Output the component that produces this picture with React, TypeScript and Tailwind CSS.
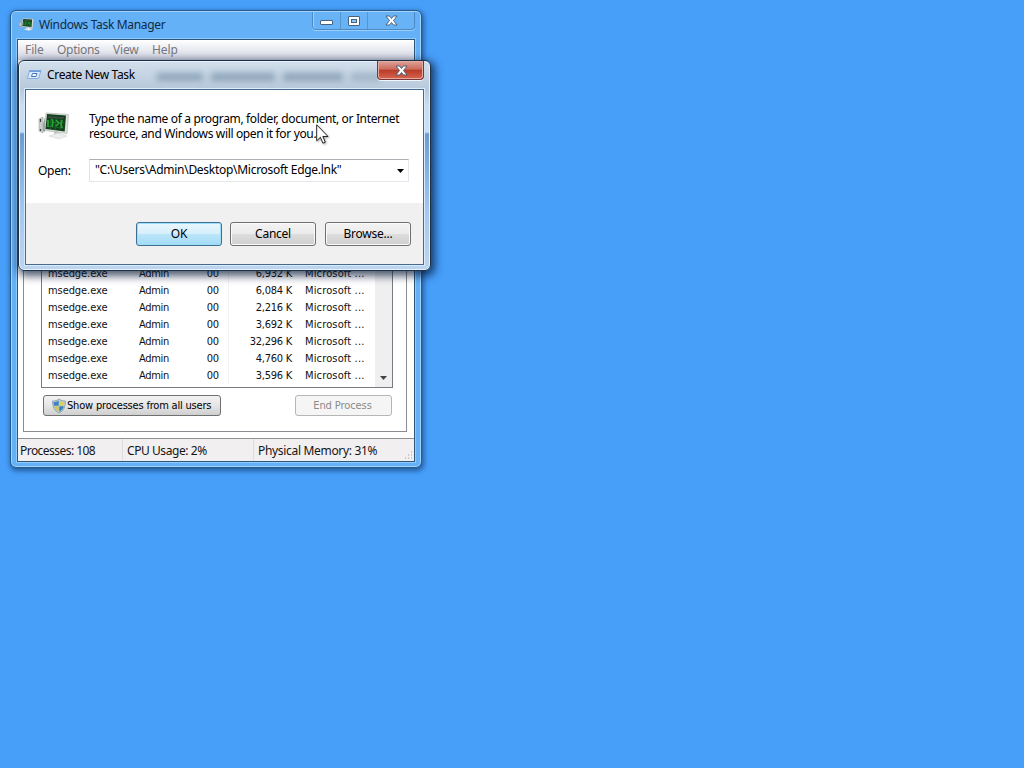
import React from 'react';

const rows = ['6,932 K', '6,084 K', '2,216 K', '3,692 K', '32,296 K', '4,760 K', '3,596 K'];

function Monitor({ className }: { className: string }) {
  return (
    <svg viewBox="0 0 32 30" className={className}>
      <path d="M1 8l4-2v16l-4-2z" fill="#c9cdcb" stroke="#a0a8a4" strokeWidth=".6" />
      <path d="M2.500 8v3M2.500 18v2" stroke="#37433d" strokeWidth="1.200" />
      <path d="M5 13l2-7v15l-2-1z" fill="#9aa39d" />
      <path d="M8 2l22.500 1.500-1.500 19-22-3z" fill="#dfe3df" stroke="#b0b6b0" strokeWidth=".7" />
      <path d="M9 3l19 1.500-1.300 16L7.500 18z" fill="#12401d" />
      <path d="M10 5l16 1-.2 2-16-1z" fill="#384b3f" />
      <path d="M9 11l17 1M8.500 15l17 2M13 7l-1 11M18 7l-1 12M23 8l-1 11" stroke="#1d6a2b" strokeWidth=".9" />
      <path d="M10 9v7M14 8l1 3-1 5M18 9l3 3-3 3M24 9l-1 4 1 4" fill="none" stroke="#28a534" strokeWidth="1.700" />
      <path d="M16 20l6 1v3l-6-1z" fill="#c1c5c0" />
      <path d="M11 25l9-3 9 3-8 3z" fill="#eceeec" stroke="#d3d6d3" strokeWidth=".6" />
    </svg>
  );
}

function RunIcon() {
  return (
    <svg viewBox="0 0 16 12" className="h-3 w-4">
      <path d="M3.500 1.500h11.500l-2.500 8H1.500z" fill="#dcebfc" stroke="#84addf" />
      <path d="M3.500 1.500H15l-.4 1.500H3z" fill="#6e9fdd" />
      <path d="M6.500 4.500H11l-1 3H5.500z" fill="#fff" stroke="#3f72bb" />
      <path d="M0 7h3M0 9h2" stroke="#a9c6e6" />
    </svg>
  );
}

function Shield() {
  return (
    <svg viewBox="0 0 16 16" className="h-4 w-4 shrink-0">
      <path d="M8 1c2 1.500 4 2 6.500 2 0 6-2 10-6.500 12C3.500 13 1.500 9 1.500 3 4 3 6 2.500 8 1z" fill="#bdccd4" stroke="#829aa8" strokeWidth=".8" />
      <path d="M7.700 2.500v5.200H3C2.700 6.500 2.600 5.300 2.600 4c2 0 3.600-.5 5.100-1.500z" fill="#3c83c5" />
      <path d="M8.300 2.500v5.200H13c.3-1.200.4-2.400.4-3.700-2 0-3.600-.5-5.100-1.500z" fill="#d9cf62" />
      <path d="M7.700 8.300v5.400C5.300 12.500 3.700 10.500 3.100 8.300z" fill="#d1c657" />
      <path d="M8.300 8.300v5.400c2.400-1.200 4-3.200 4.600-5.400z" fill="#3581bd" />
    </svg>
  );
}

function Cross() {
  return (
    <svg viewBox="0 0 13 11" className="h-[11px] w-[13px]">
      <path d="M1 1h3.500l2 2.500 2-2.500H12L8.500 5.500 12 10H8.500l-2-2.500-2 2.500H1l3.500-4.500z" fill="#fff" stroke="#405a75" strokeWidth=".9" />
    </svg>
  );
}

function TaskManager() {
  return (
    <div className="absolute top-[10px] left-[10px] flex h-[458px] w-[412px] flex-col rounded-[6px] border border-[#245a8c] bg-[#64b1f8] px-[6px] pb-[5px] shadow-[inset_0_0_0_1px_#a5d5ff,1px_2px_5px_1px_rgba(0,25,65,0.5)]">
      <div className="flex h-[28px] shrink-0 items-start">
        <Monitor className="mt-[6px] ml-0.5 h-[15px] w-[15px]" />
        <span className="mt-[6px] ml-[5px] text-[12px] leading-4 tracking-[-0.33px] text-[#102a45]">Windows Task Manager</span>
        <div className="mt-px ml-auto flex h-[18px] w-[103px] rounded-b-[4px] border border-t-0 border-[#4b8ac5] bg-[#68b2f6] shadow-[0_1px_0_#9bd0fd,inset_1px_0_0_#9bd0fd]">
          <div className="flex w-[28px] items-center justify-center border-r border-[#5795cf]">
            <div className="mt-1 h-[5px] w-[13px] rounded-[1px] border border-[#47627e] bg-white" />
          </div>
          <div className="flex w-[27px] items-center justify-center border-r border-[#5795cf]">
            <div className="flex h-[10px] w-[12px] items-center justify-center rounded-[1px] border border-[#47627e] bg-white">
              <div className="h-1 w-[6px] border border-[#47627e] bg-[#8ec5f5]" />
            </div>
          </div>
          <div className="flex flex-1 items-center justify-center"><Cross /></div>
        </div>
      </div>
      <div className="flex min-h-0 flex-1 flex-col border border-[#2c5579] bg-white shadow-[0_0_0_1px_#91caff]">
        <div className="flex h-5 shrink-0 bg-gradient-to-b from-white to-[#d3d6e2] pl-[7px] text-[12px] leading-5 text-[#77777d]">
          <span className="w-[32px] tracking-[-0.1px]">File</span>
          <span className="w-[56px] tracking-[-0.3px]">Options</span>
          <span className="w-[39px] tracking-[-0.2px]">View</span>
          <span className="tracking-[-0.1px]">Help</span>
        </div>
        <div className="mr-[7px] mb-[6px] ml-[5px] mt-5 flex min-h-0 flex-1 flex-col border border-[#8b8c91] pr-[13px] pb-[15px] pl-[17px]">
          <div className="flex min-h-0 flex-1 border border-[#777b82] bg-white">
            <div className="flex flex-1 flex-col justify-end pb-[3px] font-['DejaVu_Sans_Condensed','DejaVu_Sans',sans-serif] text-[11px] leading-[17px] tracking-[-0.15px] text-[#101010] [font-stretch:condensed]">
              {rows.map((memory) => (
                <div key={memory} className="flex h-[17px]">
                  <span className="w-[90px] pl-[6px] tracking-[-0.08px]">msedge.exe</span>
                  <span className="w-[61px] pl-[7px] tracking-[-0.3px]">Admin</span>
                  <span className="w-[36px] border-r border-[#f3f3f3] pr-[9px] text-right">00</span>
                  <span className="w-[64px] pr-px text-right tracking-[-0.25px]">{memory}</span>
                  <span className="pl-[12px] tracking-[0.15px]">Microsoft ...</span>
                </div>
              ))}
            </div>
            <div className="flex w-[17px] items-end justify-center bg-[#efefef] pb-[7px]">
              <svg viewBox="0 0 7 4" className="h-1 w-[7px]"><path d="M0 0h7L3.500 4z" fill="#444" /></svg>
            </div>
          </div>
          <div className="mt-[7px] flex h-[21px] shrink-0 justify-between pr-px pl-0.5 font-['DejaVu_Sans_Condensed','DejaVu_Sans',sans-serif] text-[11px] [font-stretch:condensed]">
            <button className="flex w-[178px] items-center rounded-[3px] border border-[#707070] bg-gradient-to-b from-[#f2f2f2] via-[#e6e6e6] to-[#cfcfcf] pl-[7px] whitespace-nowrap text-black">
              <Shield /><span className="pt-0.5 tracking-[-0.19px]">Show processes from all users</span>
            </button>
            <button className="w-[97px] rounded-[3px] border border-[#b6b6b6] bg-[#f5f5f5] pt-0.5 pr-0.5 tracking-[-0.08px] text-[#8b8b8b]">End Process</button>
          </div>
        </div>
        <div className="flex h-[23px] shrink-0 border-t border-[#8f9398] bg-[#f2eff1] text-[12px] leading-[23px] text-[#151515]">
          <span className="w-[105px] border-r border-[#dedede] pl-0.5 tracking-[-0.54px]">Processes: 108</span>
          <span className="w-[131px] border-r border-[#dedede] pl-1 tracking-[-0.43px]">CPU Usage: 2%</span>
          <span className="pl-1 tracking-[-0.32px]">Physical Memory: 31%</span>
          <svg viewBox="0 0 10 10" className="mr-px mb-px ml-auto h-[10px] w-[10px] self-end"><path d="M8 2h1M8 5h1M8 8h1M5 5h1M5 8h1M2 8h1" stroke="#bbb" strokeWidth="1.500" /></svg>
        </div>
      </div>
    </div>
  );
}

function CreateTask() {
  const button = 'h-6 w-[86px] rounded-[3px] border border-[#707070] bg-[linear-gradient(#f3f3f3_0%,#ebebeb_48%,#dddddd_50%,#cfcfcf_100%)] shadow-[inset_0_0_0_1px_#fafafa]';
  return (
    <div className="absolute top-[60px] left-[18px] flex h-[211px] w-[413px] flex-col rounded-[6px] border border-[#1c3146] bg-[linear-gradient(#d3dfeb_0px,#b7c9dc_28px,#cbddf0_45px,#c7dff8_71px,#6a9cd1_73px,#a5c8ee_150px,#bdd5ef_210px)] px-[6px] pb-[5px] shadow-[inset_0_0_0_1px_#e4f1ff,2px_3px_9px_2px_rgba(0,18,48,0.7)]">
      <div className="relative flex h-[28px] shrink-0 items-start">
        <div className="absolute inset-x-0 top-[12px] flex h-[12px] gap-2 pl-[132px] blur-[3px]">
          <div className="h-2 w-[46px] bg-[#8fa6ba]" />
          <div className="h-2 w-[64px] bg-[#8da4b9]" />
          <div className="h-2 w-[60px] bg-[#8da4b9]" />
          <div className="h-2 w-[30px] bg-[#a1b4c7]" />
        </div>
        <div className="relative mt-[8px] ml-px"><RunIcon /></div>
        <span className="relative mt-[6px] ml-[5px] text-[12px] leading-4 tracking-[-0.33px]">Create New Task</span>
        <button className="relative ml-auto flex h-[19px] w-[47px] items-center justify-center rounded-b-[4px] border border-t-0 border-[#7c3439] bg-[linear-gradient(#dda39a_0%,#cc6b5b_46%,#b93b27_50%,#d8654e_100%)] pl-0.5 shadow-[inset_0_0_0_1px_#e5aaa2,0_1px_0_#edf6ff]"><Cross /></button>
      </div>
      <div className="flex min-h-0 flex-1 flex-col border border-[#476b8d] bg-white shadow-[0_0_0_1px_#d9ebfd]">
        <div className="h-[113px] shrink-0">
          <div className="flex pt-[20px] pl-[12px]">
            <Monitor className="h-[32px] w-[32px]" />
            <p className="ml-[19px] pt-px text-[12px] leading-[15px] tracking-[-0.35px] whitespace-nowrap">
              Type the name of a program, folder, document, or Internet<br />
              resource, and Windows will open it for you.
            </p>
          </div>
          <div className="mt-[17px] flex h-[23px] items-center pl-[12px] text-[12px]">
            <span className="w-[51px] tracking-[-0.3px]">Open:</span>
            <div className="flex h-[23px] w-[320px] items-center justify-between border border-t-[#adafb5] border-r-[#e3e6ea] border-b-[#e3e6ea] border-l-[#e2e3ea] bg-white pr-1 pl-[5px]">
              <span className="mb-0.5 tracking-[-0.28px]">"C:\Users\Admin\Desktop\Microsoft Edge.lnk"</span>
              <svg viewBox="0 0 7 4" className="h-1 w-[7px]"><path d="M0 0h7L3.500 4z" fill="#000" /></svg>
            </div>
          </div>
        </div>
        <div className="flex flex-1 bg-[#f0f0f0] pt-[19px] pl-[110px] text-[12px] tracking-[-0.25px]">
          <button className="h-6 w-[86px] rounded-[3px] border border-[#3c6f91] bg-[linear-gradient(#eaf7fd_0%,#d6effc_48%,#bde6fa_50%,#a2daf5_100%)] shadow-[inset_0_0_0_1px_#9edff8]">OK</button>
          <button className={button + ' ml-2'}>Cancel</button>
          <button className={button + ' ml-[9px]'}>Browse...</button>
        </div>
      </div>
    </div>
  );
}

export default function App() {
  return (
    <main className="relative h-[768px] w-[1024px] overflow-hidden bg-[#479ffa] font-['Noto_Sans','Open_Sans',sans-serif] text-black">
      <TaskManager />
      <CreateTask />
      <svg viewBox="0 0 14 21" className="absolute top-[124px] left-[316px] h-[21px] w-[14px] drop-shadow-[1px_1px_1px_rgba(0,0,0,0.35)]">
        <path d="M.7.8v16l3.700-3.500 2.500 5.900 2.400-1-2.500-5.700h5.200z" fill="#fff" stroke="#111" strokeWidth=".9" />
      </svg>
    </main>
  );
}
